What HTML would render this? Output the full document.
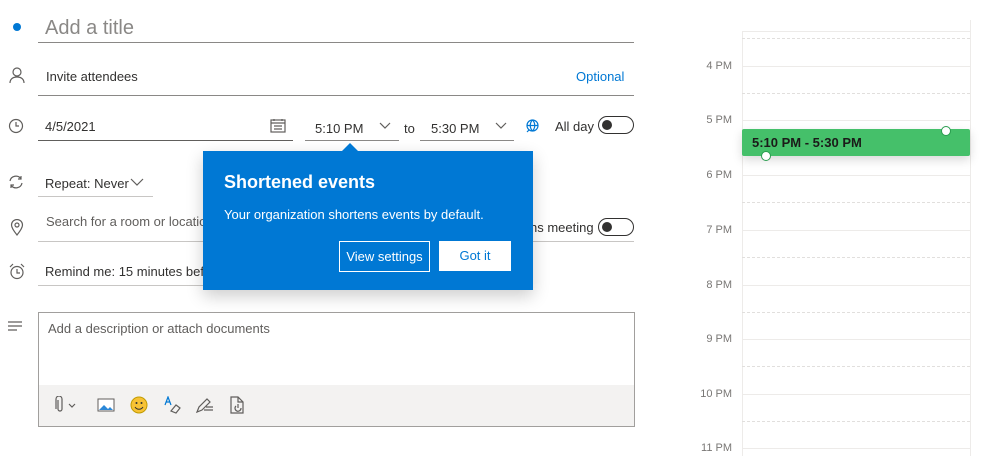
<!DOCTYPE html>
<html><head><meta charset="utf-8"><style>
body{margin:0;width:999px;height:456px;background:#fff;font-family:"Liberation Sans",sans-serif;position:relative;overflow:hidden;color:#323130}
.a{position:absolute}
.ln{position:absolute;height:1px;background:#8a8886}
.t{position:absolute;font-size:13px;color:#323130;white-space:nowrap}
.ic{position:absolute;stroke:#605e5c;fill:none;stroke-width:1.2}
.tog{position:absolute;width:34px;height:16px;border:1px solid #323130;border-radius:10px}
.tog:after{content:"";position:absolute;left:3px;top:3px;width:10px;height:10px;border-radius:50%;background:#323130}
.hl{position:absolute;left:742px;width:228px;height:1px;background:#edebe9}
.dl{position:absolute;left:742px;width:228px;border-top:1px dashed #e1dfdd}
.hr{position:absolute;left:690px;width:42px;text-align:right;font-size:11px;color:#797775}
</style></head><body>
<div class="a" style="left:13px;top:23px;width:8px;height:8px;border-radius:50%;background:#0078d4"></div>
<div class="t" style="left:45px;top:17px;font-size:20px;color:#8a8886">Add a title</div>
<div class="ln" style="left:38px;top:42px;width:596px"></div>

<svg class="ic" style="left:8px;top:66px" width="18" height="18"><circle cx="9" cy="6" r="4"/><path d="M2 17c0-4 3-6 7-6s7 2 7 6"/></svg>
<div class="t" style="left:46px;top:69px">Invite attendees</div>
<div class="t" style="left:576px;top:69px;color:#0078d4">Optional</div>
<div class="ln" style="left:38px;top:95px;width:596px"></div>

<svg class="ic" style="left:8px;top:118px" width="16" height="16"><circle cx="8" cy="8" r="6.5"/><path d="M8 4v4h3"/></svg>
<div class="t" style="left:45px;top:119px">4/5/2021</div>
<svg class="ic" style="left:270px;top:118px" width="16" height="15"><rect x="1" y="2" width="14" height="12"/><path d="M1 5h14M4 8h8M4 11h8M4 1v2M12 1v2"/></svg>
<div class="ln" style="left:38px;top:140px;width:255px;background:#605e5c"></div>
<div class="t" style="left:315px;top:121px">5:10 PM</div>
<svg class="ic" style="left:379px;top:122px" width="12" height="8"><path d="M1 1l5 5 5-5"/></svg>
<div class="ln" style="left:305px;top:140px;width:94px"></div>
<div class="t" style="left:404px;top:121px">to</div>
<div class="t" style="left:431px;top:121px">5:30 PM</div>
<svg class="ic" style="left:495px;top:122px" width="12" height="8"><path d="M1 1l5 5 5-5"/></svg>
<div class="ln" style="left:420px;top:140px;width:94px"></div>
<svg class="ic" style="left:525px;top:118px;stroke:#0078d4" width="15" height="15"><circle cx="7.5" cy="7.5" r="5.5"/><path d="M2 7.5h11M7.5 2c-3 3-3 8 0 11M7.5 2c3 3 3 8 0 11M4 12l-2 2"/></svg>
<div class="t" style="left:555px;top:119px">All day</div>
<div class="tog" style="left:598px;top:116px"></div>

<svg class="ic" style="left:8px;top:174px" width="16" height="16"><path d="M2 7a6 6 0 0 1 11-2M14 9a6 6 0 0 1-11 2M13 2v3h-3M3 14v-3h3"/></svg>
<div class="t" style="left:45px;top:176px">Repeat: Never</div>
<svg class="ic" style="left:130px;top:178px" width="14" height="9"><path d="M1 1l6 6 6-6"/></svg>
<div class="ln" style="left:38px;top:196px;width:115px;background:#c8c6c4"></div>

<svg class="ic" style="left:10px;top:219px" width="14" height="17"><path d="M7 16C3 11 1.5 8.5 1.5 6a5.5 5.5 0 0 1 11 0c0 2.5-1.5 5-5.5 10z"/><circle cx="7" cy="6" r="2"/></svg>
<div class="t" style="left:46px;top:214px;color:#605e5c">Search for a room or location</div>
<div class="t" style="left:530px;top:220px">ns meeting</div>
<div class="tog" style="left:598px;top:218px"></div>
<div class="ln" style="left:38px;top:241px;width:596px;background:#c8c6c4"></div>

<svg class="ic" style="left:8px;top:263px" width="18" height="17"><circle cx="9" cy="9.5" r="6"/><path d="M9 6v4h3M2 4l3-3M16 4l-3-3"/></svg>
<div class="t" style="left:45px;top:264px">Remind me: 15 minutes before</div>
<div class="ln" style="left:38px;top:285px;width:200px;background:#c8c6c4"></div>

<svg class="ic" style="left:7px;top:321px" width="16" height="12"><path d="M1 1h14M1 5h14M1 9h9"/></svg>
<div class="a" style="left:38px;top:312px;width:595px;height:113px;border:1px solid #a19f9d"></div>
<div class="t" style="left:48px;top:321px;color:#605e5c">Add a description or attach documents</div>
<div class="a" style="left:39px;top:385px;width:595px;height:41px;background:#f3f2f1"></div>
<svg class="ic" style="left:53px;top:396px" width="28" height="18"><path d="M5 4v9a2 2 0 0 0 4 0V3a3 3 0 0 0-6 0v10" /><path d="M16 8l3 3 3-3"/></svg>
<svg class="a" style="left:97px;top:398px" width="18" height="14"><rect x="1" y="1" width="16" height="12" fill="#fff" stroke="#605e5c"/><path d="M2 12l5-5 4 4 2-2 3 3z" fill="#2b88d8"/></svg>
<svg class="a" style="left:130px;top:396px" width="18" height="18"><circle cx="9" cy="9" r="8" fill="#f7c234" stroke="#c19c00"/><circle cx="6.5" cy="7" r="1" fill="#323130"/><circle cx="11.5" cy="7" r="1" fill="#323130"/><path d="M5 11c2 3 6 3 8 0" stroke="#323130" fill="none"/></svg>
<svg class="ic" style="left:163px;top:396px" width="18" height="18"><path d="M2 9l3-8 3 8M3 6h4" stroke="#0078d4"/><path d="M8 15l5-6 4 3-4 5z"/></svg>
<svg class="ic" style="left:195px;top:396px" width="20" height="18"><path d="M2 16l2-5 8-8 3 3-8 8zM9 14h9M11 11h7" /></svg>
<svg class="ic" style="left:229px;top:396px" width="16" height="18"><path d="M9 1H2v16h12V6zM9 1v5h5M7 10a3 3 0 1 0 5 2M9 8v4"/></svg>

<div class="a" style="left:742px;top:31px;width:1px;height:425px;background:#edebe9"></div>
<div class="a" style="left:970px;top:20px;width:1px;height:436px;background:#edebe9"></div>
<div class="hl" style="top:31px"></div>
<div class="dl" style="top:38px"></div>
<div class="hl" style="top:66px"></div><div class="dl" style="top:93px"></div>
<div class="hl" style="top:120px"></div><div class="dl" style="top:147px"></div>
<div class="hl" style="top:175px"></div><div class="dl" style="top:202px"></div>
<div class="hl" style="top:230px"></div><div class="dl" style="top:257px"></div>
<div class="hl" style="top:285px"></div><div class="dl" style="top:312px"></div>
<div class="hl" style="top:339px"></div><div class="dl" style="top:366px"></div>
<div class="hl" style="top:394px"></div><div class="dl" style="top:421px"></div>
<div class="hl" style="top:448px"></div>
<div class="hr" style="top:60px">4 PM</div>
<div class="hr" style="top:114px">5 PM</div>
<div class="hr" style="top:169px">6 PM</div>
<div class="hr" style="top:224px">7 PM</div>
<div class="hr" style="top:279px">8 PM</div>
<div class="hr" style="top:333px">9 PM</div>
<div class="hr" style="top:388px">10 PM</div>
<div class="hr" style="top:442px">11 PM</div>
<div class="a" style="left:742px;top:129px;width:228px;height:27px;background:#45c06a;border-radius:2px;box-shadow:0 4px 10px rgba(0,0,0,.15)"></div>
<div class="t" style="left:752px;top:135px;font-weight:bold;color:#1b1a19">5:10 PM - 5:30 PM</div>
<div class="a" style="left:941px;top:126px;width:8px;height:8px;border-radius:50%;background:#fff;border:1.5px solid #2a9d4f"></div>
<div class="a" style="left:761px;top:151px;width:8px;height:8px;border-radius:50%;background:#fff;border:1.5px solid #2a9d4f"></div>

<div class="a" style="left:203px;top:151px;width:330px;height:139px;background:#0078d4;box-shadow:0 6px 16px rgba(0,0,0,.2)"></div>
<div class="a" style="left:342px;top:143px;width:0;height:0;border-left:8px solid transparent;border-right:8px solid transparent;border-bottom:8px solid #0078d4"></div>
<div class="t" style="left:224px;top:172px;font-size:18px;font-weight:bold;color:#fff">Shortened events</div>
<div class="t" style="left:224px;top:207px;color:#fff">Your organization shortens events by default.</div>
<div class="a" style="left:339px;top:241px;width:89px;height:29px;border:1px solid #fff;color:#fff;font-size:13px;text-align:center;line-height:29px">View settings</div>
<div class="a" style="left:439px;top:241px;width:72px;height:30px;background:#fff;color:#0078d4;font-size:13px;text-align:center;line-height:30px">Got it</div>
</body></html>
